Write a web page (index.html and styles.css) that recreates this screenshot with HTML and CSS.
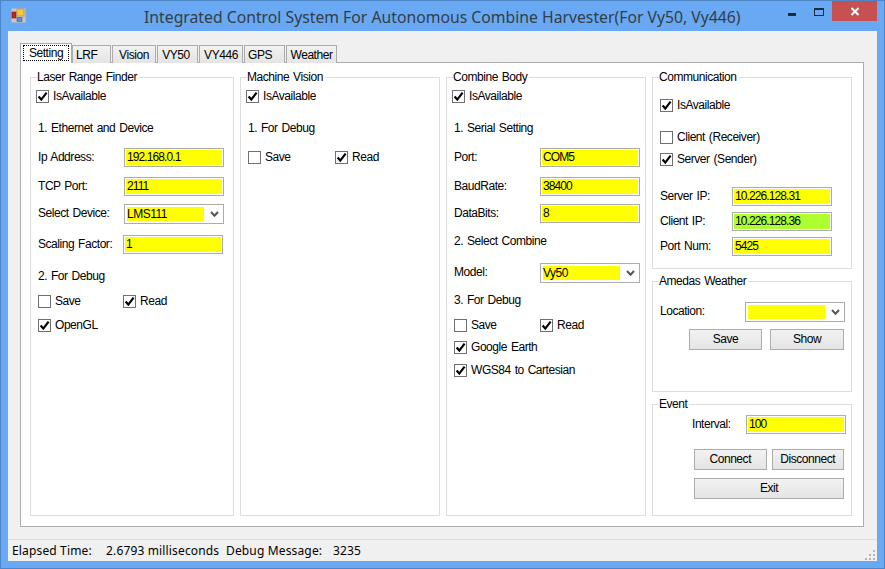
FILE: index.html
```html
<!DOCTYPE html>
<html lang="en">
<head>
<meta charset="utf-8">
<title>Integrated Control System</title>
<link rel="stylesheet" href="styles.css">
</head>
<body>
<svg class="defs" width="0" height="0" aria-hidden="true">
  <symbol id="tick" viewBox="0 0 11 11"><path d="M1.6 5.6 4.3 8.6 9.6 1.6" fill="none" stroke="#000" stroke-width="2.2"/></symbol>
  <symbol id="chev" viewBox="0 0 9 7"><path d="M1 1 4.5 4.8 8 1" fill="none" stroke="#555" stroke-width="2"/></symbol>
</svg>
<div class="window">
  <header class="titlebar">
    <svg class="appicon" width="15" height="15" viewBox="0 0 15 15">
      <rect x="0.5" y="0.5" width="14" height="14" fill="#cfc6b4"/>
      <rect x="1" y="4" width="4" height="6" fill="#c8201c" stroke="#7a1a10" stroke-width="0.6"/>
      <rect x="6" y="1" width="7" height="7" fill="#f6c93a" stroke="#b8862a" stroke-width="0.6"/>
      <rect x="6" y="9.5" width="5" height="4" fill="#5a8ed8" stroke="#3a5ea0" stroke-width="0.6"/>
    </svg>
    <h1 class="title">Integrated Control System For Autonomous Combine Harvester(For Vy50, Vy446)</h1>
    <div class="caption">
      <span class="cap-min"></span>
      <span class="cap-max"></span>
      <span class="cap-close"><svg width="10" height="9" viewBox="0 0 10 9"><path d="M1.5 1 8.5 8M8.5 1 1.5 8" stroke="#fff" stroke-width="2"/></svg></span>
    </div>
  </header>
  <div class="client">
    <div class="tabarea">
      <nav class="tabs">
        <span class="tab active w-setting"><span class="focus">Setting</span></span>
        <span class="tab w-lrf">LRF</span>
        <span class="tab w-vision">Vision</span>
        <span class="tab w-vy50">VY50</span>
        <span class="tab w-vy446">VY446</span>
        <span class="tab w-gps">GPS</span>
        <span class="tab w-weather">Weather</span>
      </nav>
      <main class="panel">
        <section class="group g-laser">
          <h2 class="legend">Laser Range Finder</h2>
          <div class="row mt-3 out-2"><label class="check"><span class="box"><svg width="11" height="11"><use href="#tick"/></svg></span>IsAvailable</label></div>
          <div class="row note mt-13">1. Ethernet and Device</div>
          <div class="row mt-10"><span class="lab lab-86">Ip Address:</span><span class="field w-100">192.168.0.1</span></div>
          <div class="row mt-10"><span class="lab lab-86">TCP Port:</span><span class="field w-100">2111</span></div>
          <div class="row tall mt-8"><span class="lab lab-86">Select Device:</span><span class="combo w-100"><span class="sel">LMS111</span><svg class="chev" width="9" height="7"><use href="#chev"/></svg></span></div>
          <div class="row mt-11"><span class="lab lab-85">Scaling Factor:</span><span class="field w-100">1</span></div>
          <div class="row note mt-13">2. For Debug</div>
          <div class="row mt-6"><label class="check col-85"><span class="box"></span>Save</label><label class="check"><span class="box"><svg width="11" height="11"><use href="#tick"/></svg></span>Read</label></div>
          <div class="row mt-5"><label class="check"><span class="box"><svg width="11" height="11"><use href="#tick"/></svg></span>OpenGL</label></div>
        </section>

        <section class="group g-vision">
          <h2 class="legend">Machine Vision</h2>
          <div class="row mt-3 out-2"><label class="check"><span class="box"><svg width="11" height="11"><use href="#tick"/></svg></span>IsAvailable</label></div>
          <div class="row note mt-13">1. For Debug</div>
          <div class="row mt-10"><label class="check col-87"><span class="box"></span>Save</label><label class="check"><span class="box"><svg width="11" height="11"><use href="#tick"/></svg></span>Read</label></div>
        </section>

        <section class="group g-combine">
          <h2 class="legend">Combine Body</h2>
          <div class="row mt-3 out-2"><label class="check"><span class="box"><svg width="11" height="11"><use href="#tick"/></svg></span>IsAvailable</label></div>
          <div class="row note mt-13">1. Serial Setting</div>
          <div class="row mt-10"><span class="lab lab-86">Port:</span><span class="field w-100">COM5</span></div>
          <div class="row mt-10"><span class="lab lab-86">BaudRate:</span><span class="field w-100">38400</span></div>
          <div class="row mt-8"><span class="lab lab-86">DataBits:</span><span class="field w-100">8</span></div>
          <div class="row note mt-9">2. Select Combine</div>
          <div class="row tall mt-12"><span class="lab lab-86">Model:</span><span class="combo w-100"><span class="sel">Vy50</span><svg class="chev" width="9" height="7"><use href="#chev"/></svg></span></div>
          <div class="row note mt-8">3. For Debug</div>
          <div class="row mt-6"><label class="check col-86"><span class="box"></span>Save</label><label class="check"><span class="box"><svg width="11" height="11"><use href="#tick"/></svg></span>Read</label></div>
          <div class="row mt-3"><label class="check"><span class="box"><svg width="11" height="11"><use href="#tick"/></svg></span>Google Earth</label></div>
          <div class="row mt-4"><label class="check"><span class="box"><svg width="11" height="11"><use href="#tick"/></svg></span>WGS84 to Cartesian</label></div>
        </section>

        <div class="stack">
          <section class="group g-comm">
            <h2 class="legend">Communication</h2>
            <div class="row mt-12"><label class="check"><span class="box"><svg width="11" height="11"><use href="#tick"/></svg></span>IsAvailable</label></div>
            <div class="row mt-13"><label class="check"><span class="box"></span>Client (Receiver)</label></div>
            <div class="row mt-3"><label class="check"><span class="box"><svg width="11" height="11"><use href="#tick"/></svg></span>Server (Sender)</label></div>
            <div class="row mt-18"><span class="lab lab-72">Server IP:</span><span class="field w-100">10.226.128.31</span></div>
            <div class="row mt-6"><span class="lab lab-72">Client IP:</span><span class="field green w-100">10.226.128.36</span></div>
            <div class="row mt-6"><span class="lab lab-72">Port Num:</span><span class="field w-100">5425</span></div>
          </section>
          <section class="group g-amedas">
            <h2 class="legend">Amedas Weather</h2>
            <div class="row tall mt-14"><span class="lab lab-85">Location:</span><span class="combo w-100"><span class="sel"></span><svg class="chev" width="9" height="7"><use href="#chev"/></svg></span></div>
            <div class="btnrow in-29 mt-7">
              <button class="btn w-73">Save</button>
              <button class="btn w-74">Show</button>
            </div>
          </section>
          <section class="group g-event">
            <h2 class="legend">Event</h2>
            <div class="row mt-4 right"><span class="lab lab-53">Interval:</span><span class="field w-100">100</span></div>
            <div class="btnrow in-34 mt-15">
              <button class="btn w-73">Connect</button>
              <button class="btn w-73">Disconnect</button>
            </div>
            <div class="btnrow in-34 mt-8">
              <button class="btn w-151">Exit</button>
            </div>
          </section>
        </div>
      </main>
    </div>
    <footer class="status">
      <span class="st-a">Elapsed Time:</span><span class="st-b">2.6793 milliseconds</span><span class="st-c">Debug Message:</span><span>3235</span>
      <svg class="grip" width="12" height="11" viewBox="0 0 12 11" fill="#b4b4b4"><rect x="9" y="0" width="2" height="2"/><rect x="5" y="4" width="2" height="2"/><rect x="9" y="4" width="2" height="2"/><rect x="1" y="8" width="2" height="2"/><rect x="5" y="8" width="2" height="2"/><rect x="9" y="8" width="2" height="2"/></svg>
    </footer>
  </div>
</div>
</body>
</html>
```
FILE: styles.css
```css
* { box-sizing: border-box; }
html, body { margin: 0; padding: 0; }
body { width: 885px; height: 569px; overflow: hidden; font: 12px/14px "Liberation Sans", Arial, sans-serif; letter-spacing: -0.45px; word-spacing: 1px; color: #000; }
.defs { display: block; height: 0; }

.window { width: 885px; height: 569px; display: flex; flex-direction: column; background: #69a9f3; border: 1px solid #4f86c6; padding: 0 7px 7px 7px; }
.titlebar { height: 30px; flex: none; display: flex; align-items: flex-start; }
.appicon { margin: 7px 0 0 3px; flex: none; }
.title { margin: 6px 0 0 118px; font: 400 15.75px/20px "Noto Sans", sans-serif; letter-spacing: 0; word-spacing: 0; color: #333d45; white-space: nowrap; flex: none; width: 598px; }
.caption { margin-left: auto; display: flex; align-items: flex-start; }
.cap-min { width: 8px; height: 3px; background: #1f2a38; margin: 12px 18px 0 0; }
.cap-max { width: 10px; height: 8px; border: 1px solid #1f2a38; border-top-width: 2px; margin: 7px 8px 0 0; }
.cap-close { width: 45px; height: 20px; background: #c75050; display: flex; align-items: center; justify-content: center; }

.client { flex: 1; min-height: 0; display: flex; flex-direction: column; background: #f0f0f0; }
.tabarea { flex: 1; min-height: 0; padding: 12px 0 0 12px; }
.tabs { display: flex; align-items: flex-end; height: 20px; margin-bottom: -1px; position: relative; z-index: 1; }
.tab { height: 18px; border: 1px solid #acacac; border-bottom: 0; background: linear-gradient(#f2f2f2, #e4e4e4); margin-right: 1px; display: flex; align-items: center; justify-content: center; line-height: 14px; }
.tab.active { height: 20px; margin-right: 0; background: #fff; padding-bottom: 2px; }
.focus { border: 1px dotted #000; padding: 0 2px; height: 16px; line-height: 14px; width: 46px; text-align: center; }
.w-setting { width: 52px; }
.w-lrf { width: 39px; justify-content: flex-start; padding-left: 3px; }
.w-vision { width: 44px; }
.w-vy50 { width: 41px; padding-right: 3px; }
.w-vy446 { width: 44px; }
.w-gps { width: 41px; justify-content: flex-start; padding-left: 3px; }
.w-weather { width: 51px; }

.panel { width: 844px; height: 465px; background: #fff; border: 1px solid #acacac; display: flex; gap: 6px; padding: 14px 0 0 9px; }
.group { border: 1px solid #dcdcdc; padding: 0 7px; background: #fff; }
.g-laser { width: 204px; height: 439px; }
.g-vision { width: 200px; height: 439px; }
.g-combine { width: 200px; height: 439px; }
.stack { width: 200px; height: 439px; display: flex; flex-direction: column; gap: 12px; }
.g-comm { height: 192px; }
.g-amedas { height: 111px; }
.g-event { height: 112px; }
.legend { margin: -8px 0 0 -1px; padding: 0 2px 0 0; font: inherit; background: #fff; width: fit-content; height: 14px; white-space: nowrap; }

.row { height: 19px; display: flex; align-items: center; white-space: nowrap; }
.row.tall { height: 20px; }
.row.note { padding-bottom: 2px; }
.out-2 { margin-left: -2px; }
.right { justify-content: flex-end; margin-right: -2px; }
.lab { padding-bottom: 2px; flex: none; }
.lab-86 { width: 86px; }
.lab-85 { width: 85px; }
.lab-72 { width: 72px; }
.lab-53 { width: 54px; }
.col-85 { width: 85px; }
.col-86 { width: 86px; }
.col-87 { width: 87px; }

.field { height: 19px; flex: none; display: block; border: 1px solid #acacac; box-shadow: inset 0 0 0 1px #fff; background: #ff0; padding: 1px 2px 0; line-height: 15px; letter-spacing: -0.9px; }
.field.green { background: #adff2f; }
.w-100 { width: 100px; }
.combo { height: 20px; flex: none; display: flex; align-items: center; border: 1px solid #acacac; background: #fff; padding-left: 2px; }
.sel { width: 77px; height: 14px; background: #ff0; display: block; line-height: 14px; flex: none; letter-spacing: -0.5px; }
.chev { margin-left: 6px; flex: none; }

.check { display: flex; align-items: center; flex: none; padding-bottom: 2px; }
.box { width: 13px; height: 13px; border: 1px solid #707070; background: #fff; margin: 2px 4px 0 0; flex: none; display: flex; align-items: center; justify-content: center; }
.box svg { display: block; }

.btnrow { display: flex; gap: 5px; }
.in-29 { margin-left: 29px; gap: 8px; }
.in-34 { margin-left: 34px; }
.btn { height: 21px; border: 1px solid #acacac; background: linear-gradient(#f2f2f2, #e4e4e4); font: inherit; letter-spacing: -0.45px; color: #000; padding: 0 0 1px; border-radius: 0; }
.w-73 { width: 73px; }
.w-74 { width: 74px; }
.w-151 { width: 151px; }

.mt-3 { margin-top: 3px; }
.mt-4 { margin-top: 4px; }
.mt-5 { margin-top: 5px; }
.mt-6 { margin-top: 6px; }
.mt-7 { margin-top: 7px; }
.mt-8 { margin-top: 8px; }
.mt-9 { margin-top: 9px; }
.mt-10 { margin-top: 10px; }
.mt-11 { margin-top: 11px; }
.mt-12 { margin-top: 12px; }
.mt-13 { margin-top: 13px; }
.mt-14 { margin-top: 14px; }
.mt-15 { margin-top: 15px; }
.mt-18 { margin-top: 18px; }

.status { height: 22px; flex: none; border-top: 1px solid #dcdcdc; display: flex; align-items: center; padding-left: 4px; position: relative; white-space: nowrap; font-family: "Noto Sans", sans-serif; letter-spacing: 0.15px; word-spacing: 0; }
.st-a { width: 94px; }
.st-b { width: 120px; }
.st-c { width: 107px; }
.grip { margin-left: auto; margin-top: 9px; margin-right: 1px; }
```
